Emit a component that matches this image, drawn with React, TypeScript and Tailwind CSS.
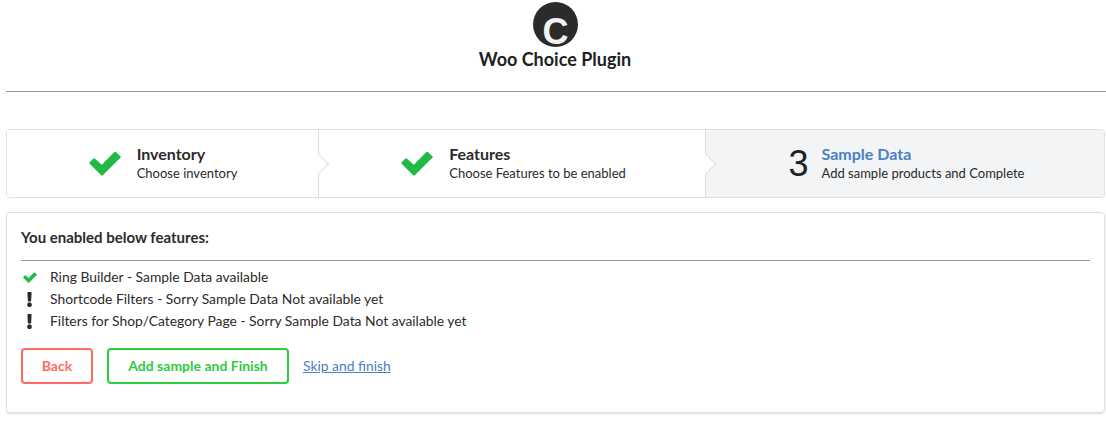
import React from "react";
import { FaExclamation } from "react-icons/fa";

type StepProps = {
    title: string;
    description: string;
    width: string;
    number?: string;
    active?: boolean;
    last?: boolean;
};

// heavier check mark than the icon packs have
const Check: React.FC<{ className: string }> = ({ className }) => (
    <svg viewBox="0 0 32 25" className={className}>
        <polygon
            points="1.5,12 5,8.5 12.7,15.5 26,2 30.5,6 13,23.5"
            fill="#21ba45"
            stroke="#21ba45"
            strokeWidth="2.4"
            strokeLinejoin="round"
        />
    </svg>
);

const Step: React.FC<StepProps> = ({ title, description, width, number, active, last }) => (
    <div
        className={`relative flex items-center justify-center h-full ${width} ${
            active ? "bg-[#f3f4f5]" : "bg-white"
        } ${last ? "" : "border-r border-[#dcdcdc]"}`}
    >
        {number ? (
            <span className="text-[36px] leading-none text-[#212121] font-['Liberation_Sans',sans-serif] mr-[13px]">
                {number}
            </span>
        ) : (
            <Check className="w-[32px] h-[25px] mr-[16px]" />
        )}
        <div>
            <div
                className={`text-[16px] leading-[17px] mb-[2px] font-bold ${
                    active ? "text-[#4a80c4]" : "text-[#2b2b2b]"
                }`}
            >
                {title}
            </div>
            <div className="text-[13px] leading-[18px] text-[#2b2b2b]">{description}</div>
        </div>
        {!last && (
            <div className="absolute top-1/2 right-0 w-[15px] h-[15px] translate-x-[8px] -translate-y-1/2 rotate-45 bg-white border-t border-r border-[#dcdcdc] z-10"></div>
        )}
    </div>
);

const features = [
    { ok: true, text: "Ring Builder - Sample Data available" },
    { ok: false, text: "Shortcode Filters - Sorry Sample Data Not available yet" },
    { ok: false, text: "Filters for Shop/Category Page - Sorry Sample Data Not available yet" },
];

const App: React.FC = () => {
    return (
        <div className="w-[1106px] h-[425px] overflow-hidden bg-white pl-[6px] pt-[2px] font-['Lato',sans-serif] text-[#212121]">
            {/* Logo and title */}
            <div className="w-[1099px] flex flex-col items-center">
                <div className="w-[45px] h-[45px] rounded-full bg-[#2b2b2b] flex items-start justify-center">
                    <span className="text-[#f2f2f2] text-[36px] leading-[27px] font-bold font-['Liberation_Sans',sans-serif] mt-[16px]">
                        C
                    </span>
                </div>
                <h1 className="text-[18px] leading-[24px] font-bold mr-[1px] text-[#212121]">
                    Woo Choice Plugin
                </h1>
            </div>
            <hr className="mt-[20px] border-t border-[#999999]" />

            {/* Steps */}
            <div className="flex items-center w-[1099px] h-[69px] mt-[37px] border border-[#dfdfdf] rounded-[4px] overflow-hidden">
                <Step width="w-[312px] pl-[1px]" title="Inventory" description="Choose inventory" />
                <Step width="w-[387px] pl-[3px]" title="Features" description="Choose Features to be enabled" />
                <Step
                    width="flex-1 pl-[3px]"
                    number="3"
                    title="Sample Data"
                    description="Add sample products and Complete"
                    active
                    last
                />
            </div>

            {/* Summary card */}
            <div className="w-[1099px] h-[201px] mt-[14px] border border-[#dfdfdf] rounded-[4px] shadow-[0_1px_2px_rgba(34,36,38,0.15)] px-[14px] pt-[14px]">
                <h2 className="text-[15px] leading-[20px] font-bold text-[#2b2b2b]">You enabled below features:</h2>
                <hr className="mt-[13px] mb-[5px] border-t border-[#999999]" />
                <ul>
                    {features.map((f) => (
                        <li key={f.text} className="flex items-center h-[22px] text-[13.86px] text-[#2b2b2b]">
                            <span className="w-[29px] flex justify-center pr-[12px]">
                                {f.ok ? (
                                    <Check className="w-[14px] h-[11px]" />
                                ) : (
                                    <FaExclamation className="text-[#2b2b2b]" size={15} />
                                )}
                            </span>
                            {f.text}
                        </li>
                    ))}
                </ul>
                <div className="flex items-center mt-[16px] text-[14px]">
                    <button className="w-[72px] h-[36px] pb-[2px] border-2 border-[#ff6b63] rounded-[4px] text-[#ff6b63] font-bold">
                        Back
                    </button>
                    <button className="w-[182px] h-[36px] pb-[2px] ml-[14px] border-2 border-[#2ecc40] rounded-[4px] text-[#2ecc40] font-bold">
                        Add sample and Finish
                    </button>
                    <a href="#" className="ml-[14px] text-[13.86px] text-[#4a80c4] underline">
                        Skip and finish
                    </a>
                </div>
            </div>
        </div>
    );
};

export default App;
